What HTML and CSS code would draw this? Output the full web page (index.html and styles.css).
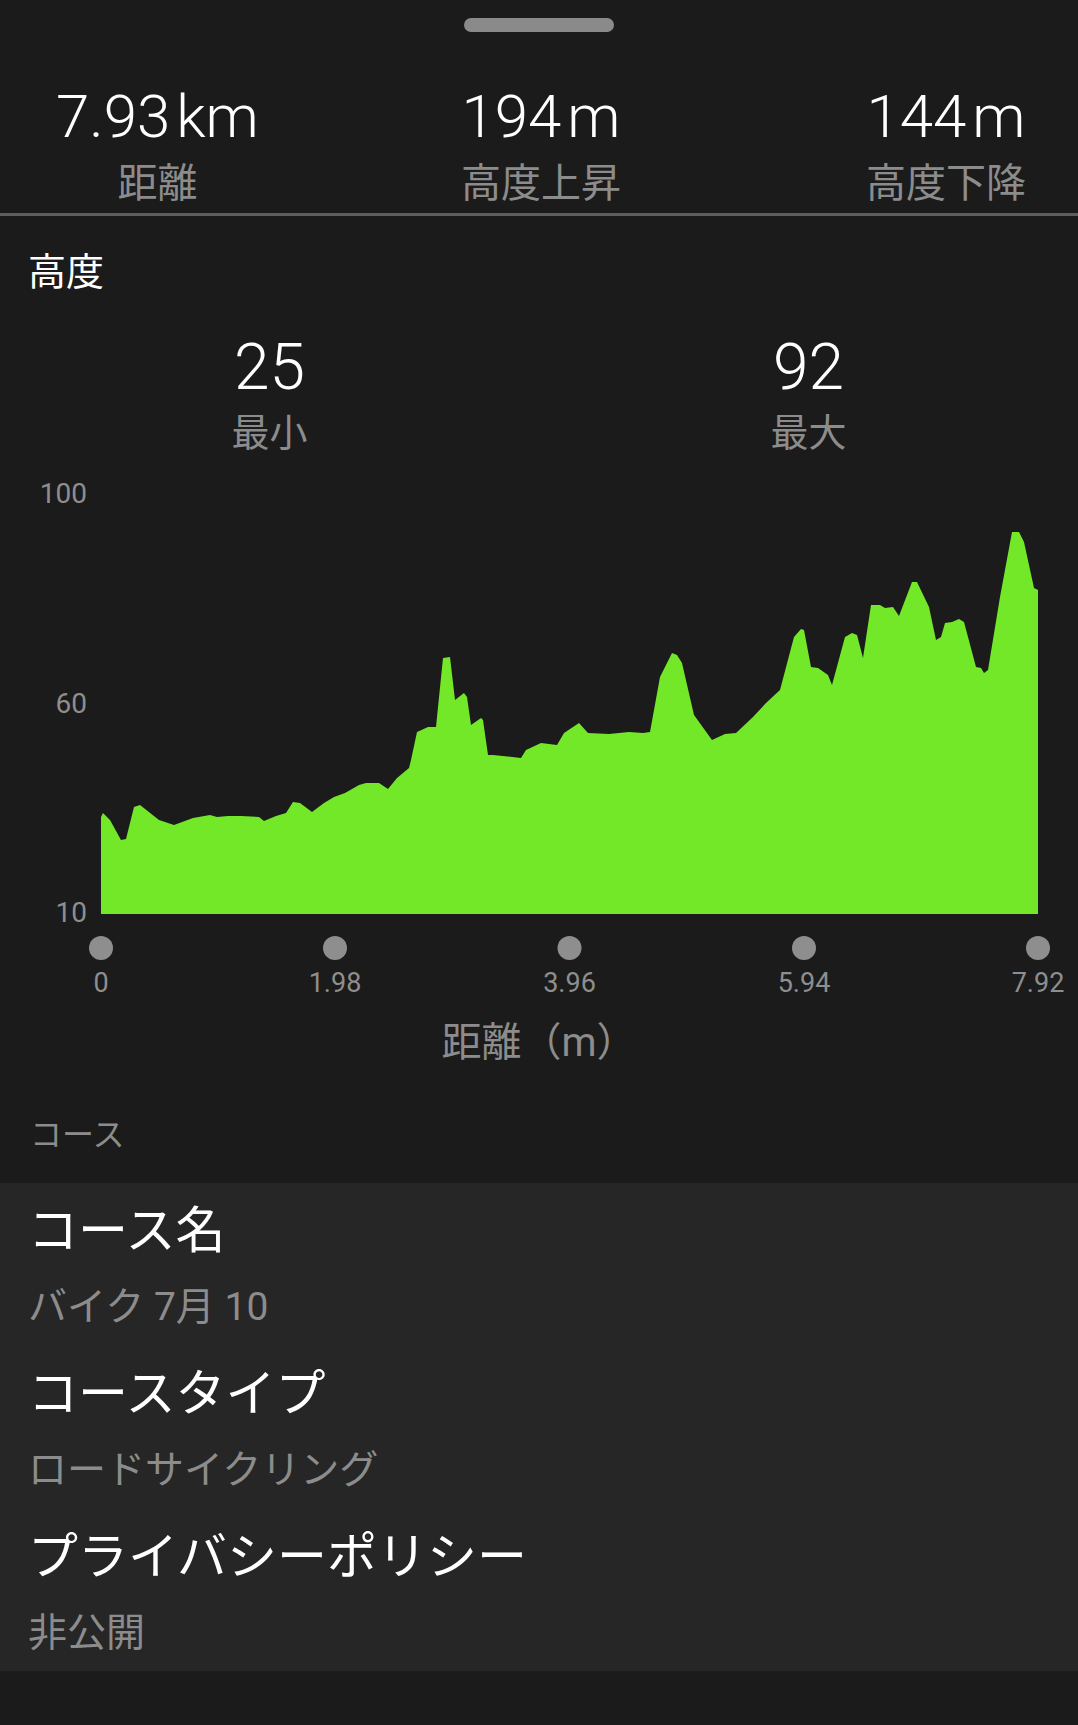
FILE: index.html
```html
<!DOCTYPE html>
<html lang="ja">
<head>
  <meta charset="UTF-8">
  <meta name="viewport" content="width=device-width, initial-scale=1.0">
  <title>コース詳細</title>
  <link rel="stylesheet" href="styles.css">
</head>
<body>
  <div class="handle"></div>

  <div class="stats">
    <div class="stat stat-left">
      <div class="stat-value">7.93<span class="unit">km</span></div>
      <div class="stat-label">距離</div>
    </div>
    <div class="stat stat-center">
      <div class="stat-value">194<span class="unit">m</span></div>
      <div class="stat-label">高度上昇</div>
    </div>
    <div class="stat stat-right">
      <div class="stat-value">144<span class="unit">m</span></div>
      <div class="stat-label">高度下降</div>
    </div>
  </div>

  <div class="section-title">高度</div>

  <div class="minmax">
    <div class="mm">
      <div class="mm-value">25</div>
      <div class="mm-label">最小</div>
    </div>
    <div class="mm">
      <div class="mm-value">92</div>
      <div class="mm-label">最大</div>
    </div>
  </div>

  <!-- 高度グラフ -->
  <svg class="chart" width="1078" height="530" viewBox="0 0 1078 530">
    <g class="y-labels">
      <text x="87" y="33">100</text>
      <text x="87" y="243">60</text>
      <text x="87" y="452">10</text>
    </g>
    <path class="area" d="M101,444 L101,347 L103,343 L110,350 L121,370 L126,369 L134,337 L140,335 L159,350 L174,355 L193,348 L210,345 L217,347 L228,346 L241,346 L259,347 L264,351 L276,346 L286,343 L293,332 L300,333 L312,342 L324,333 L334,327 L345,323 L359,315 L366,313 L379,313 L388,319 L397,308 L409,298 L411,290 L417,262 L428,257 L436,257 L443,188 L450,187 L455,230 L464,223 L467,227 L471,255 L481,248 L483,250 L488,285 L493,285 L521,288 L526,280 L541,273 L557,275 L564,263 L579,253 L588,263 L609,264 L629,262 L643,263 L650,262 L660,207 L672,183 L677,185 L682,193 L694,245 L712,270 L725,264 L736,263 L753,247 L766,233 L780,220 L794,167 L801,159 L804,160 L811,197 L818,198 L828,205 L832,215 L845,167 L852,163 L857,165 L863,188 L871,135 L880,135 L885,138 L893,137 L899,146 L912,112 L917,112 L929,137 L936,170 L941,167 L945,153 L952,152 L959,149 L964,152 L976,197 L981,198 L984,203 L988,200 L1000,127 L1012,62 L1019,62 L1024,72 L1034,118 L1038,120 L1038,444 Z"/>
    <g class="dots">
      <circle cx="101" cy="478" r="12"/>
      <circle cx="335" cy="478" r="12"/>
      <circle cx="569.5" cy="478" r="12"/>
      <circle cx="804" cy="478" r="12"/>
      <circle cx="1038" cy="478" r="12"/>
    </g>
    <g class="x-labels">
      <text x="101" y="522">0</text>
      <text x="335" y="522">1.98</text>
      <text x="569.5" y="522">3.96</text>
      <text x="804" y="522">5.94</text>
      <text x="1038" y="522">7.92</text>
    </g>
  </svg>

  <div class="axis-title">距離（m）</div>

  <div class="group-title">コース</div>

  <div class="card">
    <div class="item">
      <div class="item-title">コース名</div>
      <div class="item-value">バイク 7月 10</div>
    </div>
    <div class="item">
      <div class="item-title">コースタイプ</div>
      <div class="item-value">ロードサイクリング</div>
    </div>
    <div class="item">
      <div class="item-title">プライバシーポリシー</div>
      <div class="item-value">非公開</div>
    </div>
  </div>
</body>
</html>
```

FILE: styles.css
```css
body {
  margin: 0;
  background-color: #1b1b1b;
  color: #ffffff;
  font-family: Roboto, "Noto Sans CJK JP", sans-serif;
}

.handle {
  width: 150px;
  height: 14px;
  margin: 18px auto 0;
  border-radius: 7px;
  background-color: #8a8a8a;
}

/* 上部の3つの数値 */
.stats {
  display: grid;
  grid-template-columns: 1fr auto 1fr;
  margin-top: 50px;
  padding: 0 52px 5px 56px;
  border-bottom: 3px solid #5e5e5e;
}

.stat {
  display: flex;
  flex-direction: column;
  align-items: center;
}
.stat-left { justify-self: start; }
.stat-center { justify-self: center; }
.stat-right { justify-self: end; }

.stat-value {
  font-size: 60px;
  font-weight: 300;
  line-height: 70px;
}
.stat-value .unit {
  margin-left: 6px;
}

.stat-label {
  margin-top: 8px;
  font-size: 40px;
  line-height: 48px;
  color: #8c8c8c;
}

.section-title {
  padding: 32px 28px 0;
  font-size: 38px;
  line-height: 48px;
}

.minmax {
  display: grid;
  grid-template-columns: 1fr 1fr;
  margin-top: 34px;
}

.mm {
  display: flex;
  flex-direction: column;
  align-items: center;
}

.mm-value {
  font-size: 64px;
  font-weight: 300;
  line-height: 75px;
}

.mm-label {
  margin-top: 5px;
  font-size: 38px;
  line-height: 46px;
  color: #8c8c8c;
}

.chart {
  display: block;
  margin-top: 14px;
}
.chart .area {
  fill: #72e829;
}
.chart .dots circle {
  fill: #8e8e8e;
}
.chart text {
  font-family: Roboto, sans-serif;
  fill: #8e8e8e;
}
.chart .y-labels text {
  font-size: 28px;
  text-anchor: end;
}
.chart .x-labels text {
  font-size: 27px;
  text-anchor: middle;
}

.axis-title {
  margin-top: 19px;
  text-align: center;
  font-size: 40px;
  line-height: 48px;
  color: #8c8c8c;
}

.group-title {
  margin-top: 48px;
  padding: 0 30px;
  font-size: 32px;
  line-height: 40px;
  color: #8c8c8c;
}

.card {
  margin-top: 28px;
  padding: 20px 28px 14px;
  background-color: #262626;
  display: flex;
  flex-direction: column;
  gap: 35px;
}

.item-title {
  font-size: 50px;
  line-height: 56px;
}

.item-value {
  margin-top: 24px;
  font-size: 39px;
  line-height: 48px;
  color: #8c8c8c;
}
```
